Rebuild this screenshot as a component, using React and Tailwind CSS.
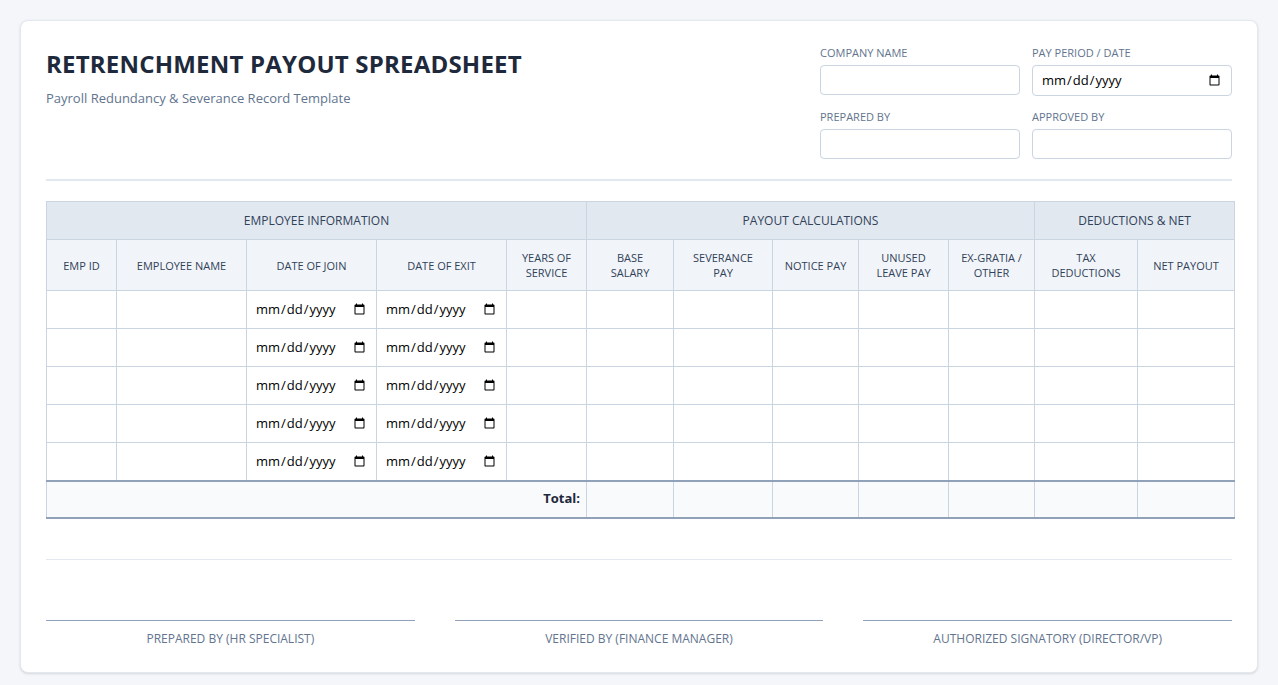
const widths = [70, 130, 130, 130, 80, 87, 99, 86, 90, 86, 103, 97];

const subHeads = [
  ['EMP ID'],
  ['EMPLOYEE NAME'],
  ['DATE OF JOIN'],
  ['DATE OF EXIT'],
  ['YEARS OF', 'SERVICE'],
  ['BASE', 'SALARY'],
  ['SEVERANCE', 'PAY'],
  ['NOTICE PAY'],
  ['UNUSED', 'LEAVE PAY'],
  ['EX-GRATIA /', 'OTHER'],
  ['TAX', 'DEDUCTIONS'],
  ['NET PAYOUT'],
];

function Field({ label, type = 'text' }) {
  return (
    <div className="flex flex-col">
      <label className="text-[11px] uppercase text-slate-500 mb-[5px] leading-[14px]">{label}</label>
      <input
        type={type}
        className="h-[30px] w-full rounded border border-slate-300 bg-white px-2 text-[13px] text-black"
      />
    </div>
  );
}

function DateCell() {
  return (
    <input
      type="date"
      className="w-full bg-transparent px-2 text-[13px] text-black text-center outline-none"
    />
  );
}

export default function App() {
  const rows = [0, 1, 2, 3, 4];
  return (
    <div className="min-h-screen bg-[#f4f6f9] p-5" style={{ fontFamily: '"Open Sans", sans-serif' }}>
      <div className="rounded-lg border border-slate-200 bg-white px-[25px] pt-[25px] pb-[24px] shadow-sm">
        <div className="flex justify-between pb-[20px] border-b-2 border-slate-200">
          <div className="pt-[2px]">
            <h1 className="text-[24px] font-bold leading-[32px] text-[#1e293b] tracking-[0.2px]">
              RETRENCHMENT PAYOUT SPREADSHEET
            </h1>
            <p className="mt-[9px] text-[13px] text-slate-500">Payroll Redundancy &amp; Severance Record Template</p>
          </div>
          <div className="grid grid-cols-2 gap-x-3 gap-y-[14px] w-[412px]">
            <Field label="Company Name" />
            <div className="flex flex-col">
              <label className="text-[11px] uppercase text-slate-500 mb-[5px] leading-[14px]">Pay Period / Date</label>
              <input type="date" className="h-[31px] w-full rounded border border-slate-300 bg-white px-2 text-[13px] text-black" />
            </div>
            <Field label="Prepared By" />
            <Field label="Approved By" />
          </div>
        </div>

        <table className="mt-[20px] w-full table-fixed border-collapse text-[11px] text-slate-700">
          <colgroup>
            {widths.map((w, i) => (
              <col key={i} style={{ width: w }} />
            ))}
          </colgroup>
          <thead>
            <tr className="h-[38px] bg-[#e2e8f0] text-[12px]">
              <th colSpan={5} className="border border-slate-300 font-normal">EMPLOYEE INFORMATION</th>
              <th colSpan={5} className="border border-slate-300 font-normal">PAYOUT CALCULATIONS</th>
              <th colSpan={2} className="border border-slate-300 font-normal">DEDUCTIONS &amp; NET</th>
            </tr>
            <tr className="h-[51px] bg-[#f1f5f9]">
              {subHeads.map((h, i) => (
                <th key={i} className="border border-slate-300 font-normal leading-[15px] px-1">
                  {h.map((l, j) => (
                    <div key={j}>{l}</div>
                  ))}
                </th>
              ))}
            </tr>
          </thead>
          <tbody>
            {rows.map((r) => (
              <tr key={r} className="h-[38px]">
                {widths.map((_, i) => (
                  <td key={i} className="border border-slate-300 p-0">
                    {i === 2 || i === 3 ? <DateCell /> : null}
                  </td>
                ))}
              </tr>
            ))}
            <tr className="h-[37px] bg-[#f8fafc] border-y-2 border-y-slate-400">
              <td colSpan={5} className="border-x border-slate-300 text-right pr-[6px] text-[13px] font-bold text-[#1e293b]">
                Total:
              </td>
              {widths.slice(5).map((_, i) => (
                <td key={i} className="border-x border-slate-300" />
              ))}
            </tr>
          </tbody>
        </table>

        <div className="mt-[40px] border-t border-slate-200 pt-[60px] grid grid-cols-3 gap-10">
          {['PREPARED BY (HR SPECIALIST)', 'VERIFIED BY (FINANCE MANAGER)', 'AUTHORIZED SIGNATORY (DIRECTOR/VP)'].map((t) => (
            <div key={t} className="border-t border-slate-400 pt-[9px] text-center text-[12px] text-slate-500">
              {t}
            </div>
          ))}
        </div>
      </div>
    </div>
  );
}
